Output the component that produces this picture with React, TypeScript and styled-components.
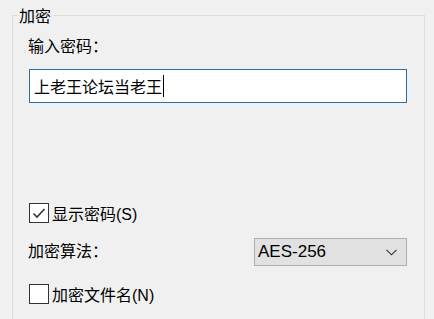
import React from "react";
import styled, { createGlobalStyle } from "styled-components";

const Global = createGlobalStyle`
  html, body {
    margin: 0;
    padding: 0;
    background: #f0f0f0;
    width: 434px;
    height: 319px;
    overflow: hidden;
  }
  body {
    font-family: "Liberation Sans", "Noto Sans CJK SC", sans-serif;
    font-size: 16px;
    color: #000;
  }
`;

const Group = styled.fieldset`
  margin: 2px 9px 0 12px;
  padding: 0 0 24px 0;
  border: 1px solid #dcdcdc;
  min-width: 0;
  box-sizing: border-box;
`;

const Legend = styled.legend`
  margin-left: 4px;
  padding: 4px 2px 0;
  font-size: 16px;
  line-height: 22px;
  color: #000;
`;

const Body = styled.div`
  display: flex;
  flex-direction: column;
  padding: 0 17px 0 15px;
`;

const Label = styled.div`
  font-size: 16px;
  line-height: 20px;
  margin-top: ${(p: { $top: number }) => p.$top}px;
`;

const TextBox = styled.div`
  margin-top: 12px;
  margin-left: 1px;
  height: 34px;
  box-sizing: border-box;
  border: 1px solid #2f6f9f;
  background: #fff;
  display: flex;
  align-items: center;
  padding-left: 4px;
  font-size: 16px;
`;

const Caret = styled.span`
  display: inline-block;
  width: 1px;
  height: 22px;
  background: #000;
  margin-left: 1px;
`;

const CheckRow = styled.label`
  display: flex;
  align-items: center;
  margin-top: ${(p: { $top: number }) => p.$top}px;
  margin-left: 1px;
  height: 20px;
  gap: 3px;
  font-size: 16px;
`;

const Box = styled.span`
  width: 20px;
  height: 20px;
  box-sizing: border-box;
  border: 1px solid #333;
  background: #fff;
  display: flex;
  align-items: center;
  justify-content: center;
`;

const AlgoRow = styled.div`
  display: flex;
  align-items: center;
  justify-content: space-between;
  margin-top: 15px;
  height: 28px;
`;

const Select = styled.div`
  width: 153px;
  height: 28px;
  box-sizing: border-box;
  border: 1px solid #adadad;
  background: #e1e1e1;
  display: flex;
  align-items: center;
  justify-content: space-between;
  padding: 0 9px 0 3px;
  font-size: 17px;
`;

const Check = () => (
  <svg width="14" height="12" viewBox="0 0 14 12">
    <path d="M1.5 6.5 L5 10 L12.5 2" fill="none" stroke="#333" strokeWidth="1.6" />
  </svg>
);

const Chevron = () => (
  <svg width="11" height="7" viewBox="0 0 11 7">
    <path d="M0.5 0.8 L5.5 5.8 L10.5 0.8" fill="none" stroke="#333" strokeWidth="1.1" />
  </svg>
);

export default function App() {
  return (
    <>
      <Global />
      <Group>
        <Legend>加密</Legend>
        <Body>
          <Label $top={9}>输入密码：</Label>
          <TextBox>
            上老王论坛当老王
            <Caret />
          </TextBox>
          <CheckRow $top={100}>
            <Box>
              <Check />
            </Box>
            显示密码(S)
          </CheckRow>
          <AlgoRow>
            <Label $top={0}>加密算法：</Label>
            <Select>
              <span>AES-256</span>
              <Chevron />
            </Select>
          </AlgoRow>
          <CheckRow $top={18}>
            <Box />
            加密文件名(N)
          </CheckRow>
        </Body>
      </Group>
    </>
  );
}
